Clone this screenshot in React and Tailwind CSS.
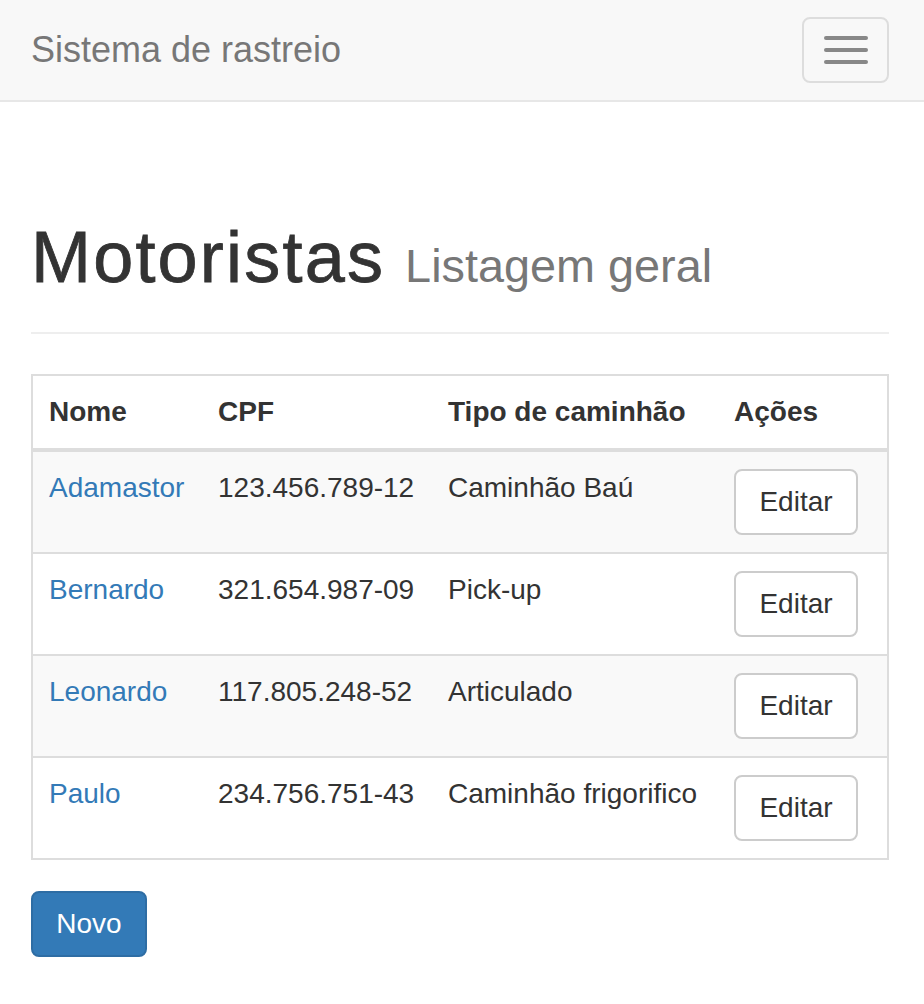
import React from "react";

const drivers = [
	{ name: "Adamastor", cpf: "123.456.789-12", truck: "Caminhão Baú" },
	{ name: "Bernardo", cpf: "321.654.987-09", truck: "Pick-up" },
	{ name: "Leonardo", cpf: "117.805.248-52", truck: "Articulado" },
	{ name: "Paulo", cpf: "234.756.751-43", truck: "Caminhão frigorifico" },
];

const cols = "grid grid-cols-[169px_230px_286px_169px]";

function Navbar() {
	return (
		<nav className="flex h-[102px] items-center justify-between border-b-2 border-[#e7e7e7] bg-[#f8f8f8] pl-[31px] pr-[35px]">
			<a className="text-[36px] leading-[40px] text-[#777]">Sistema de rastreio</a>
			<button className="flex h-[66px] w-[87px] flex-col items-center justify-center gap-[8px] rounded-lg border-2 border-[#ddd]">
				<span className="block h-[4px] w-[44px] rounded-sm bg-[#888]" />
				<span className="block h-[4px] w-[44px] rounded-sm bg-[#888]" />
				<span className="block h-[4px] w-[44px] rounded-sm bg-[#888]" />
			</button>
		</nav>
	);
}

export default function App() {
	return (
		<div className="min-h-[1004px] bg-white font-['Liberation_Sans',Arial,sans-serif] text-[#333]">
			<Navbar />

			<main className="pl-[31px] pr-[35px]">
				{/* page header */}
				<h1 className="mt-[115px] border-b-2 border-[#eee] pb-[35px] text-[72px] leading-[80px] text-[#333]">
					<span className="tracking-[2.2px] [-webkit-text-stroke:0.8px_#333]">Motoristas</span>{" "}
					<small className="text-[46.8px] leading-none text-[#777]">Listagem geral</small>
				</h1>

				{/* table */}
				<div className="mt-[40px] border-2 border-[#ddd] text-[28px] leading-[40px]">
					<div className={`${cols} border-b-4 border-[#ddd] font-bold`}>
						<div className="px-4 py-4">Nome</div>
						<div className="px-4 py-4">CPF</div>
						<div className="px-4 py-4">Tipo de caminhão</div>
						<div className="px-4 py-4">Ações</div>
					</div>

					{drivers.map((d, i) => (
						<div
							key={d.name}
							className={`${cols} ${i > 0 ? "border-t-2 border-[#ddd]" : ""} ${i % 2 === 0 ? "bg-[#f9f9f9]" : "bg-white"}`}
						>
							<div className="px-4 py-4">
								<a className="text-[#337ab7]">{d.name}</a>
							</div>
							<div className="px-4 py-4">{d.cpf}</div>
							<div className="px-4 py-4">{d.truck}</div>
							<div className="pl-4 py-[17px]">
								<button className="h-[66px] w-[124px] rounded-lg border-2 border-[#ccc] bg-white text-[28px] text-[#333]">
									Editar
								</button>
							</div>
						</div>
					))}
				</div>

				<button className="mt-[31px] h-[66px] w-[116px] rounded-lg border-2 border-[#2e6da4] bg-[#337ab7] text-[28px] text-white">
					Novo
				</button>
			</main>
		</div>
	);
}
